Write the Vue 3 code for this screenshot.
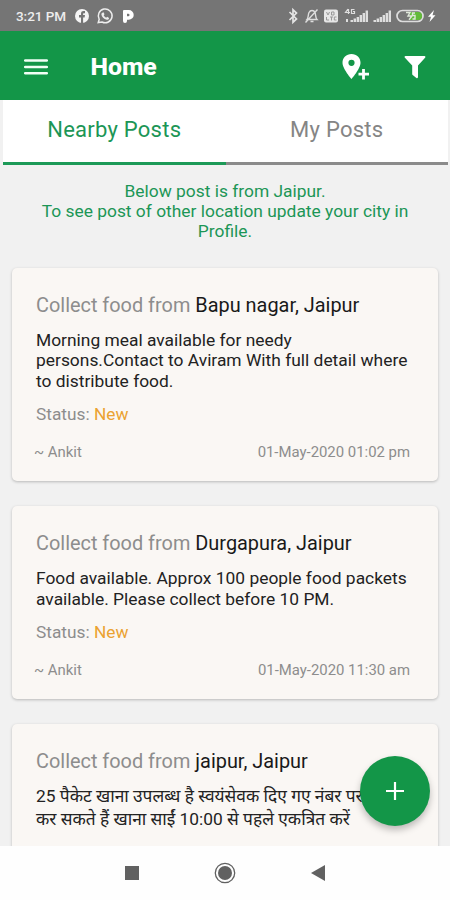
<script setup>
const posts = [
  {
    place: 'Bapu nagar, Jaipur',
    lines: ['Morning meal available for needy', 'persons.Contact to Aviram With full detail where', 'to distribute food.'],
    status: 'New', author: '~ Ankit', date: '01-May-2020 01:02 pm',
  },
  {
    place: 'Durgapura, Jaipur',
    lines: ['Food available. Approx 100 people food packets', 'available. Please collect before 10 PM.'],
    status: 'New', author: '~ Ankit', date: '01-May-2020 11:30 am',
  },
  {
    place: 'jaipur, Jaipur',
    hindi: true,
    lines: ['25 पैकेट खाना उपलब्ध है स्वयंसेवक दिए गए नंबर पर', 'कर सकते हैं खाना साईं 10:00 से पहले एकत्रित करें'],
  },
]
</script>

<template>
  <div class="screen">
    <div class="status-bar">
      <span class="clock">3:21 PM</span>
      <svg class="left-icons" width="62" height="18" viewBox="0 0 62 18">
        <circle cx="9" cy="9" r="7" fill="#f4f4f4" />
        <path d="M8 16V10.500H6V8h2V6.800C8 4.700 9.100 4 10.600 4H12v2.200h-1c-.7 0-.9.3-.9.9V8H12l-.4 2.500h-1.500V16z" fill="#757575" />
        <path d="M25.200 15.600l1-3.300A6.900 6.900 0 1 1 29 15z" fill="none" stroke="#ededed" stroke-width="1.500" />
        <path d="M29.400 5.700l1.100-.4 1 2-.8 1c.6 1.200 1.400 1.900 2.500 2.400l.9-.9 2 1.100c-.2 1.400-1.200 2-2.400 1.800-2.800-.5-5-2.800-5.300-5.200-.1-.8.3-1.500 1-1.800z" fill="#ededed" />
        <path fill-rule="evenodd" d="M51 3h4.800a4.900 4.900 0 0 1 0 9.800H54v1.300a2 2 0 0 1-4 0V4a1 1 0 0 1 1-1zM54 6.800v2.400h1.300a1.200 1.200 0 0 0 0-2.400z" fill="#fff" />
      </svg>
      <svg class="right-icons" width="150" height="20" viewBox="0 0 150 20">
        <path d="M1.500 6l7 7-3.500 3.200V3.800L8.500 7l-7 7" fill="none" stroke="#e3e3e3" stroke-width="1.700" />
        <path d="M19 13.500c1.500-1.500 1-5 2-7 .8-1.500 2-2 3-2s2.500.8 3 2c.8 2 .5 5.500 2 7zM17.500 16.500L29.500 3.500M22.500 15.500h3" fill="none" stroke="#ddd" stroke-width="1.400" />
        <rect x="36" y="3.500" width="14" height="13" rx="2" fill="#e6e6e6" />
        <path d="M38.500 6l1.500 3 1.500-3M43.500 6v3H46V6zM38.500 11v3H41M42 11h3M43.500 11v3.500M48.500 11h-2.200v3h2.200" fill="none" stroke="#999" stroke-width="1" />
        <path d="M60 3l-2.500 3.500H62M60.500 3v5M66.500 3.500h-3v4h3v-2H65" fill="none" stroke="#dedede" stroke-width="1.200" />
        <path d="M58 13h2v3h-2zM62.500 14H65v2h-2.500zM65.600 12.500H68V16h-2.400zM68.600 11H71v5h-2.400zM71.600 9H74v7h-2.400zM74.600 7H77v9h-2.400zM77.600 4.500H80V16h-2.400z" fill="#dedede" />
        <path d="M85.500 14H88v2h-2.500zM88.600 12.500H91V16h-2.400zM91.600 11H94v5h-2.400zM94.600 9H97v7h-2.400zM97.600 7h2.400v9h-2.400zM100.600 4.500h2.400V16h-2.400z" fill="#dedede" />
        <rect x="109" y="4.500" width="26" height="11" rx="5.500" fill="#777" stroke="#ddd" stroke-width="1.700" />
        <path d="M122 6h8a4 4 0 0 1 0 8h-8z" fill="#62bb38" />
        <path d="M118 6.500h4l-2 3.500h4l-3 3.800M127 7h-2.500v2.500h2.500V13h-2.500" fill="none" stroke="#dfe8da" stroke-width="1.400" />
        <path d="M146 4l-6 6.800h3L141.500 16l6-6.800h-3z" fill="#fff" />
      </svg>
    </div>

    <header class="app-bar">
      <svg class="menu" width="24" height="18" viewBox="0 0 24 18">
        <path d="M1.200 2.500h21.600M1.200 9h21.600M1.200 15.200h21.600" stroke="#f2fff6" stroke-width="2.600" stroke-linecap="round" />
      </svg>
      <h1>Home</h1>
      <svg class="pin" width="29" height="28" viewBox="0 0 29 28">
        <path fill-rule="evenodd" d="M10.500 1C5.300 1 1.500 4.900 1.500 9.700c0 6 9 16.300 9 16.300s9-10.300 9-16.300C19.500 4.900 15.700 1 10.500 1zm0 5.700a3.100 3.100 0 1 1 0 6.200 3.100 3.100 0 0 1 0-6.200z" fill="#fff" />
        <path d="M22.500 16v10.500M17.500 21.200H28" stroke="#fff" stroke-width="2.800" />
      </svg>
      <svg class="filter" width="22" height="24" viewBox="0 0 22 24">
        <path d="M1.500 1h19c.9 0 1.200 1 .6 1.700L14 10.500V22c0 1-.8 1.500-1.600.9L9 20.300c-.6-.4-.8-.8-.8-1.400v-8.400L.9 2.700C.3 2 .6 1 1.500 1z" fill="#fff" />
      </svg>
    </header>

    <nav class="tabs">
      <div class="tab active"><span>Nearby Posts</span></div>
      <div class="tab"><span>My Posts</span></div>
    </nav>

    <main class="feed">
      <p class="notice">
        <span>Below post is from Jaipur.</span>
        <span>To see post of other location update your city in</span>
        <span>Profile.</span>
      </p>
      <article v-for="post in posts" :key="post.place" class="card">
        <h2>Collect food from <b>{{ post.place }}</b></h2>
        <div class="description" :class="{ hindi: post.hindi }">
          <p v-for="line in post.lines" :key="line">{{ line }}</p>
        </div>
        <p v-if="post.status" class="status">Status: <b>{{ post.status }}</b></p>
        <footer v-if="post.author"><span>{{ post.author }}</span><span>{{ post.date }}</span></footer>
      </article>
    </main>

    <button class="fab" aria-label="Add post">
      <svg width="20" height="20" viewBox="0 0 20 20"><path d="M10 1v18M1 10h18" stroke="#fff" stroke-width="2.200" /></svg>
    </button>

    <div class="nav-bar">
      <svg width="14" height="14" viewBox="0 0 14 14"><path d="M0 0h14v14H0z" fill="#616161" /></svg>
      <svg width="22" height="22" viewBox="0 0 22 22">
        <circle cx="11" cy="11" r="9.700" fill="none" stroke="#616161" stroke-width="1.300" />
        <circle cx="11" cy="11" r="7" fill="#616161" />
      </svg>
      <svg width="14" height="16" viewBox="0 0 14 16"><path d="M14 0v16L0 8z" fill="#616161" /></svg>
    </div>
  </div>
</template>

<style>
body { margin: 0; }
</style>

<style scoped>
.screen {
  position: relative;
  display: flex;
  flex-direction: column;
  width: 450px;
  height: 900px;
  overflow: hidden;
  background: #f1f1f1;
  font-family: Roboto, "Noto Sans", sans-serif;
  white-space: nowrap;
}
h1, h2, p { margin: 0; font-weight: 400; }
b { font-weight: 400; }
svg { display: block; flex: none; }
.status-bar {
  flex: none;
  display: flex;
  align-items: center;
  height: 31px;
  box-sizing: border-box;
  padding: 0 12px 0 16px;
  background: #757575;
  color: #ededed;
}
.clock { width: 50px; font-size: 13.5px; font-weight: 500; letter-spacing: -0.05px; }
.left-icons { margin-left: 7px; }
.right-icons { margin-left: auto; }
.app-bar {
  flex: none;
  display: flex;
  align-items: center;
  height: 69px;
  box-sizing: border-box;
  padding: 2px 24px 0;
  background: #139648;
}
h1 { margin-left: 42.5px; font-size: 24.8px; font-weight: 800; line-height: 30px; color: #fff; }
.pin { margin-left: auto; }
.filter { margin-left: 34px; }
.tabs { flex: none; display: flex; height: 65px; margin: 0 2px 0 3px; background: #fff; }
.tab {
  flex: 1;
  display: flex;
  justify-content: center;
  box-sizing: border-box;
  padding-top: 16px;
  border-bottom: 3px solid #8b8b8b;
  font-size: 22px;
  line-height: 28px;
  letter-spacing: 0.25px;
  color: #858585;
}
.tab.active { border-color: #1d9a58; color: #1c9656; }
.feed { flex: 1; min-height: 0; overflow: hidden; padding: 15.5px 12px 0; }
.notice {
  display: flex;
  flex-direction: column;
  align-items: center;
  margin-bottom: 26.5px;
  font-size: 17.4px;
  line-height: 20.33px;
  color: #1c9656;
}
.card {
  box-sizing: border-box;
  margin-bottom: 25px;
  padding: 26px 28px 19px 24px;
  border-radius: 5px;
  background: #faf7f4;
  box-shadow: 0 1px 3px rgba(0, 0, 0, 0.24);
}
.card:last-child { min-height: 190px; }
h2 { font-size: 19.9px; line-height: 24px; color: #8d8d8d; }
h2 b { color: #191919; }
.description { margin: 12px 0 13px; font-size: 17.4px; line-height: 20.4px; color: #222; }
.description.hindi { margin-top: 11px; font-size: 17.35px; line-height: 23px; }
.status { font-size: 17.3px; line-height: 20px; color: #8d8d8d; }
.status b { color: #eba231; }
footer {
  display: flex;
  justify-content: space-between;
  margin: 18px 0 0 -2px;
  font-size: 14.9px;
  line-height: 20px;
  color: #8d8d8d;
}
.fab {
  position: absolute;
  left: 360px;
  top: 756px;
  display: flex;
  align-items: center;
  justify-content: center;
  width: 70px;
  height: 70px;
  padding: 0;
  border: 0;
  border-radius: 50%;
  background: #139648;
  box-shadow: 0 4px 7px rgba(0, 0, 0, 0.25);
}
.nav-bar {
  flex: none;
  display: flex;
  align-items: center;
  justify-content: space-between;
  height: 54px;
  box-sizing: border-box;
  padding: 0 125px;
  background: #fefefe;
}
</style>
